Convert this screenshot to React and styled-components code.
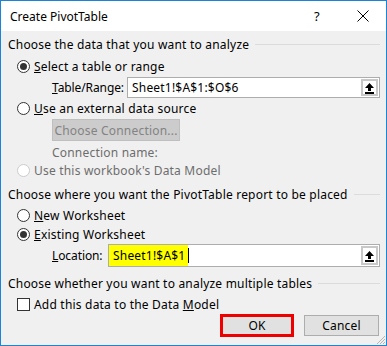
import React from 'react';
import styled, { createGlobalStyle } from 'styled-components';

const GlobalStyle = createGlobalStyle`
  html, body {
    margin: 0;
    padding: 0;
    background: #ffffff;
  }
  body {
    font-family: "Segoe UI", "Noto Sans", "Open Sans", sans-serif;
    font-size: 12px;
    letter-spacing: 0.2px;
    color: #000;
  }
`;

function UploadIcon() {
  return (
    <svg width="11" height="12" viewBox="0 0 11 12">
      <path d="M5.5 1 L10 6 L7 6 L7 9 L4 9 L4 6 L1 6 Z" fill="#000" />
      <rect x="1" y="10" width="9" height="2" fill="#000" />
    </svg>
  );
}

function RefInput({ value, highlight }) {
  return (
    <InputBox>
      <InputText $highlight={highlight}>
        {highlight ? <Marked>{value}</Marked> : value}
        {highlight && <Caret />}
      </InputText>
      <PickButton>
        <UploadIcon />
      </PickButton>
    </InputBox>
  );
}

function Radio({ checked, disabled, children }) {
  return (
    <OptionRow $disabled={disabled}>
      <RadioCircle $disabled={disabled}>{checked && <RadioDot />}</RadioCircle>
      <span>{children}</span>
    </OptionRow>
  );
}

export default function App() {
  return (
    <>
      <GlobalStyle />
      <Window>
        <TitleBar>
          <Title>Create PivotTable</Title>
          <TitleButtons>
            <HelpMark>?</HelpMark>
            <CloseMark>
              <svg width="12" height="12" viewBox="0 0 12 12">
                <path d="M0.5 0.5 L11.5 11.5 M11.5 0.5 L0.5 11.5" stroke="#000" strokeWidth="1" />
              </svg>
            </CloseMark>
          </TitleButtons>
        </TitleBar>
        <Body>
          <SectionHeader $top={3}>
            <span>Choose the data that you want to analyze</span>
            <Rule />
          </SectionHeader>

          <Row $h={20} $top={2}>
            <Radio checked>
              <u>S</u>elect a table or range
            </Radio>
          </Row>
          <FieldRow $h={21} $top={1}>
            <FieldLabel $width={75}>
              <u>T</u>able/Range:
            </FieldLabel>
            <RefInput value="Sheet1!$A$1:$O$6" />
          </FieldRow>
          <Row $h={20} $top={0}>
            <Radio>
              <u>U</u>se an external data source
            </Radio>
          </Row>
          <FieldRow $h={22} $top={1}>
            <ConnButton disabled>Choose Connection...</ConnButton>
          </FieldRow>
          <FieldRow $h={20} $top={1}>
            <MutedText>Connection name:</MutedText>
          </FieldRow>
          <Row $h={17} $top={0}>
            <Radio disabled>Use this workbook's Data Model</Radio>
          </Row>

          <SectionHeader $top={5}>
            <span>Choose where you want the PivotTable report to be placed</span>
            <Rule />
          </SectionHeader>
          <Row $h={20} $top={1}>
            <Radio>
              <u>N</u>ew Worksheet
            </Radio>
          </Row>
          <Row $h={18} $top={0}>
            <Radio checked>
              <u>E</u>xisting Worksheet
            </Radio>
          </Row>
          <FieldRow $h={23} $top={1}>
            <FieldLabel $width={56}>
              <u>L</u>ocation:
            </FieldLabel>
            <RefInput value="Sheet1!$A$1" highlight />
          </FieldRow>

          <SectionHeader $top={6}>
            <span>Choose whether you want to analyze multiple tables</span>
            <Rule />
          </SectionHeader>
          <Row $h={20} $top={1}>
            <OptionRow>
              <CheckBox />
              <span>
                Add this data to the Data <u>M</u>odel
              </span>
            </OptionRow>
          </Row>

          <Footer>
            <DialogButton $primary>OK</DialogButton>
            <DialogButton>Cancel</DialogButton>
          </Footer>
          <Grip>
            <svg width="10" height="10" viewBox="0 0 10 10">
              <path d="M9 1 L1 9 M9 4 L4 9 M9 7 L7 9" stroke="#b5b5b5" strokeWidth="1" />
            </svg>
          </Grip>
        </Body>
      </Window>
    </>
  );
}

const Window = styled.div`
  width: 387px;
  height: 346px;
  box-sizing: border-box;
  border: 1px solid #1a84d9;
  display: flex;
  flex-direction: column;
  background: #f0f0f0;
  overflow: hidden;
`;

const TitleBar = styled.div`
  height: 30px;
  flex: none;
  background: #ffffff;
  display: flex;
  align-items: center;
  justify-content: space-between;
  padding-left: 9px;
`;

const Title = styled.div`
  font-size: 12px;
  letter-spacing: 0;
  color: #000;
  margin-top: 1px;
`;

const TitleButtons = styled.div`
  display: flex;
  align-items: center;
  height: 100%;
`;

const HelpMark = styled.div`
  width: 46px;
  text-align: center;
  font-size: 13px;
`;

const CloseMark = styled.div`
  width: 46px;
  display: flex;
  justify-content: center;
`;

const Body = styled.div`
  flex: 1;
  position: relative;
  display: flex;
  flex-direction: column;
  padding: 0 6px 0 7px;
`;

const SectionHeader = styled.div`
  display: flex;
  align-items: center;
  height: 20px;
  margin-top: ${(p) => p.$top}px;
  white-space: nowrap;
`;

const Rule = styled.div`
  flex: 1;
  height: 1px;
  background: #dcdcdc;
  margin-left: 6px;
`;

const Row = styled.div`
  display: flex;
  align-items: center;
  height: ${(p) => p.$h}px;
  margin-top: ${(p) => p.$top}px;
  padding-left: 9px;
`;

const FieldRow = styled(Row)`
  padding-left: 44px;
`;

const OptionRow = styled.div`
  display: flex;
  align-items: center;
  gap: 4px;
  color: ${(p) => (p.$disabled ? '#6d6d6d' : '#000')};
`;

const RadioCircle = styled.div`
  width: 11px;
  height: 11px;
  border-radius: 50%;
  border: 1px solid ${(p) => (p.$disabled ? '#cccccc' : '#333333')};
  background: #ffffff;
  display: flex;
  align-items: center;
  justify-content: center;
`;

const RadioDot = styled.div`
  width: 7px;
  height: 7px;
  border-radius: 50%;
  background: #333333;
`;

const CheckBox = styled.div`
  width: 11px;
  height: 11px;
  border: 1px solid #333333;
  background: #ffffff;
`;

const FieldLabel = styled.div`
  width: ${(p) => p.$width}px;
  flex: none;
  white-space: nowrap;
  letter-spacing: -0.1px;
`;

const InputBox = styled.div`
  flex: 1;
  height: 100%;
  box-sizing: border-box;
  border: 1px solid #adadad;
  background: #ffffff;
  display: flex;
  align-items: stretch;
`;

const InputText = styled.div`
  flex: 1;
  display: flex;
  align-items: center;
  padding-left: ${(p) => (p.$highlight ? '0' : '4px')};
`;

const Marked = styled.span`
  display: flex;
  align-items: center;
  align-self: stretch;
  background: #ffff00;
  padding: 0 3px 0 4px;
`;

const Caret = styled.span`
  display: inline-block;
  width: 1px;
  height: 15px;
  background: #000;
`;

const PickButton = styled.div`
  width: 17px;
  flex: none;
  margin: 1px;
  box-sizing: border-box;
  border: 2px solid #c8c8c8;
  background: #ffffff;
  display: flex;
  align-items: center;
  justify-content: center;
`;

const ConnButton = styled.button`
  width: 128px;
  height: 22px;
  font-family: inherit;
  font-size: 12px;
  letter-spacing: 0.2px;
  color: #838383;
  background: #cccccc;
  border: 1px solid #bfbfbf;
  padding: 0;
`;

const MutedText = styled.span`
  color: #6d6d6d;
`;

const Footer = styled.div`
  display: flex;
  justify-content: flex-end;
  gap: 10px;
  margin-top: auto;
  margin-bottom: 8px;
  padding-right: 1px;
`;

const DialogButton = styled.button`
  width: ${(p) => (p.$primary ? '74px' : '75px')};
  height: ${(p) => (p.$primary ? '23px' : '21px')};
  box-sizing: border-box;
  font-family: inherit;
  font-size: 12px;
  letter-spacing: 0.2px;
  color: #000;
  background: #e1e1e1;
  border: ${(p) => (p.$primary ? '3px solid #ee0000' : '1px solid #adadad')};
  align-self: center;
  padding: 0;
`;

const Grip = styled.div`
  position: absolute;
  right: 0;
  bottom: 0;
  width: 10px;
  height: 10px;
  display: flex;
`;
